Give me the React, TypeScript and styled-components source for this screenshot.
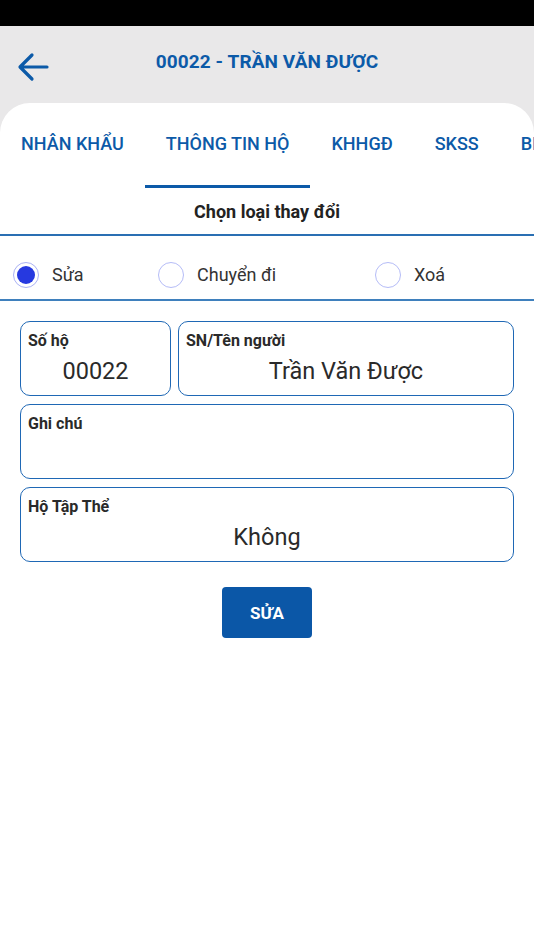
import React, { useState } from "react";
import styled, { createGlobalStyle } from "styled-components";

const GlobalStyle = createGlobalStyle`
  html, body {
    margin: 0;
    padding: 0;
    background: #ffffff;
    font-family: Roboto, "Noto Sans", Arial, sans-serif;
  }
  * { box-sizing: border-box; }
`;

const BLUE = "#0c5aa8";

const Screen = styled.div`
  width: 534px;
  height: 950px;
  background: #e9e8e9;
  display: flex;
  flex-direction: column;
  overflow: hidden;
`;

const StatusBar = styled.div`
  height: 26px;
  background: #000000;
  flex-shrink: 0;
`;

const Header = styled.div`
  height: 77px;
  display: grid;
  grid-template-columns: 34px 1fr 34px;
  align-items: center;
  padding: 0 16px 6px;
`;

const BackButton = styled.button`
  border: none;
  background: none;
  padding: 0;
  width: 34px;
  height: 34px;
  display: flex;
  align-items: center;
  justify-content: center;
  cursor: pointer;
  margin-top: 10px;
`;

const Title = styled.h1`
  margin: 0;
  text-align: center;
  font-size: 19px;
  font-weight: 700;
  color: ${BLUE};
  letter-spacing: 0.1px;
`;

const Card = styled.div`
  flex: 1;
  background: #ffffff;
  border-radius: 30px 30px 0 0;
  display: flex;
  flex-direction: column;
`;

const TabBar = styled.div`
  display: flex;
  height: 85px;
  overflow: hidden;
  white-space: nowrap;
`;

const Tab = styled.div<{ $active?: boolean }>`
  position: relative;
  padding: 30px 21px 0;
  font-size: 18px;
  font-weight: 500;
  color: ${BLUE};
  flex-shrink: 0;

  &::after {
    content: "";
    position: absolute;
    left: 0;
    right: 0;
    bottom: 0;
    height: 3px;
    background: ${(p) => (p.$active ? BLUE : "transparent")};
  }
`;

const SectionTitle = styled.div`
  height: 48px;
  display: flex;
  align-items: center;
  justify-content: center;
  font-size: 18px;
  font-weight: 700;
  color: #222222;
  border-bottom: 2px solid #2a6fb3;
`;

const RadioRow = styled.div`
  height: 65px;
  display: flex;
  align-items: center;
  padding: 14px 0 0 13px;
  border-bottom: 2px solid #3f80bd;
`;

const RadioItem = styled.label<{ $width: number }>`
  width: ${(p) => p.$width}px;
  display: flex;
  align-items: center;
  gap: 13px;
  font-size: 18px;
  color: #333333;
  cursor: pointer;
`;

const RadioCircle = styled.span<{ $checked: boolean }>`
  width: 26px;
  height: 26px;
  border-radius: 50%;
  border: 1.5px solid ${(p) => (p.$checked ? "#aab2f5" : "#b5bcf7")};
  display: flex;
  align-items: center;
  justify-content: center;

  &::after {
    content: "";
    width: 18px;
    height: 18px;
    border-radius: 50%;
    background: ${(p) => (p.$checked ? "#2639e0" : "transparent")};
  }
`;

const Form = styled.div`
  padding: 20px 20px 0;
  display: flex;
  flex-direction: column;
  gap: 8px;
`;

const FieldRow = styled.div`
  display: flex;
  gap: 7px;
`;

const Field = styled.div<{ $width?: number }>`
  ${(p) => (p.$width ? `width: ${p.$width}px; flex: none;` : "flex: 1 0 auto;")}
  height: 75px;
  border: 1.5px solid #1f68b5;
  border-radius: 10px;
  padding: 9px 7px 0;
  display: flex;
  flex-direction: column;
`;

const FieldLabel = styled.div`
  font-size: 16px;
  font-weight: 700;
  color: #2a2a2a;
  line-height: 20px;
`;

const FieldValue = styled.div`
  text-align: center;
  font-size: 23.5px;
  color: #2a2a2a;
  line-height: 26px;
  margin-top: 7px;
`;

const ButtonWrap = styled.div`
  display: flex;
  justify-content: center;
  padding-top: 25px;
`;

const SubmitButton = styled.button`
  width: 90px;
  height: 51px;
  background: #0b57a7;
  border: none;
  border-radius: 4px;
  color: #ffffff;
  font-family: Roboto, Arial, sans-serif;
  font-size: 17px;
  font-weight: 700;
  cursor: pointer;
`;

const tabs = ["NHÂN KHẨU", "THÔNG TIN HỘ", "KHHGĐ", "SKSS", "BIẾN ĐỘNG"];
const options = [
  { label: "Sửa", width: 145 },
  { label: "Chuyển đi", width: 217 },
  { label: "Xoá", width: 120 },
];

export default function App() {
  const [choice, setChoice] = useState("Sửa");
  return (
    <>
      <GlobalStyle />
      <Screen>
        <StatusBar />
        <Header>
          <BackButton aria-label="back">
            <svg width="32" height="30" viewBox="0 0 32 30" fill="none">
              <path
                d="M30 15H4M15 3L3 15l12 12"
                stroke={BLUE}
                strokeWidth="3.2"
                strokeLinecap="round"
                strokeLinejoin="round"
              />
            </svg>
          </BackButton>
          <Title>00022 - TRẦN VĂN ĐƯỢC</Title>
          <span />
        </Header>
        <Card>
          <TabBar>
            {tabs.map((t, i) => (
              <Tab key={t} $active={i === 1}>
                {t}
              </Tab>
            ))}
          </TabBar>
          <SectionTitle>Chọn loại thay đổi</SectionTitle>
          <RadioRow>
            {options.map((o) => (
              <RadioItem key={o.label} $width={o.width} onClick={() => setChoice(o.label)}>
                <RadioCircle $checked={choice === o.label} />
                {o.label}
              </RadioItem>
            ))}
          </RadioRow>
          <Form>
            <FieldRow>
              <Field $width={151}>
                <FieldLabel>Số hộ</FieldLabel>
                <FieldValue>00022</FieldValue>
              </Field>
              <Field>
                <FieldLabel>SN/Tên người</FieldLabel>
                <FieldValue>Trần Văn Được</FieldValue>
              </Field>
            </FieldRow>
            <Field>
              <FieldLabel>Ghi chú</FieldLabel>
              <FieldValue />
            </Field>
            <Field>
              <FieldLabel>Hộ Tập Thể</FieldLabel>
              <FieldValue>Không</FieldValue>
            </Field>
          </Form>
          <ButtonWrap>
            <SubmitButton>SỬA</SubmitButton>
          </ButtonWrap>
        </Card>
      </Screen>
    </>
  );
}
